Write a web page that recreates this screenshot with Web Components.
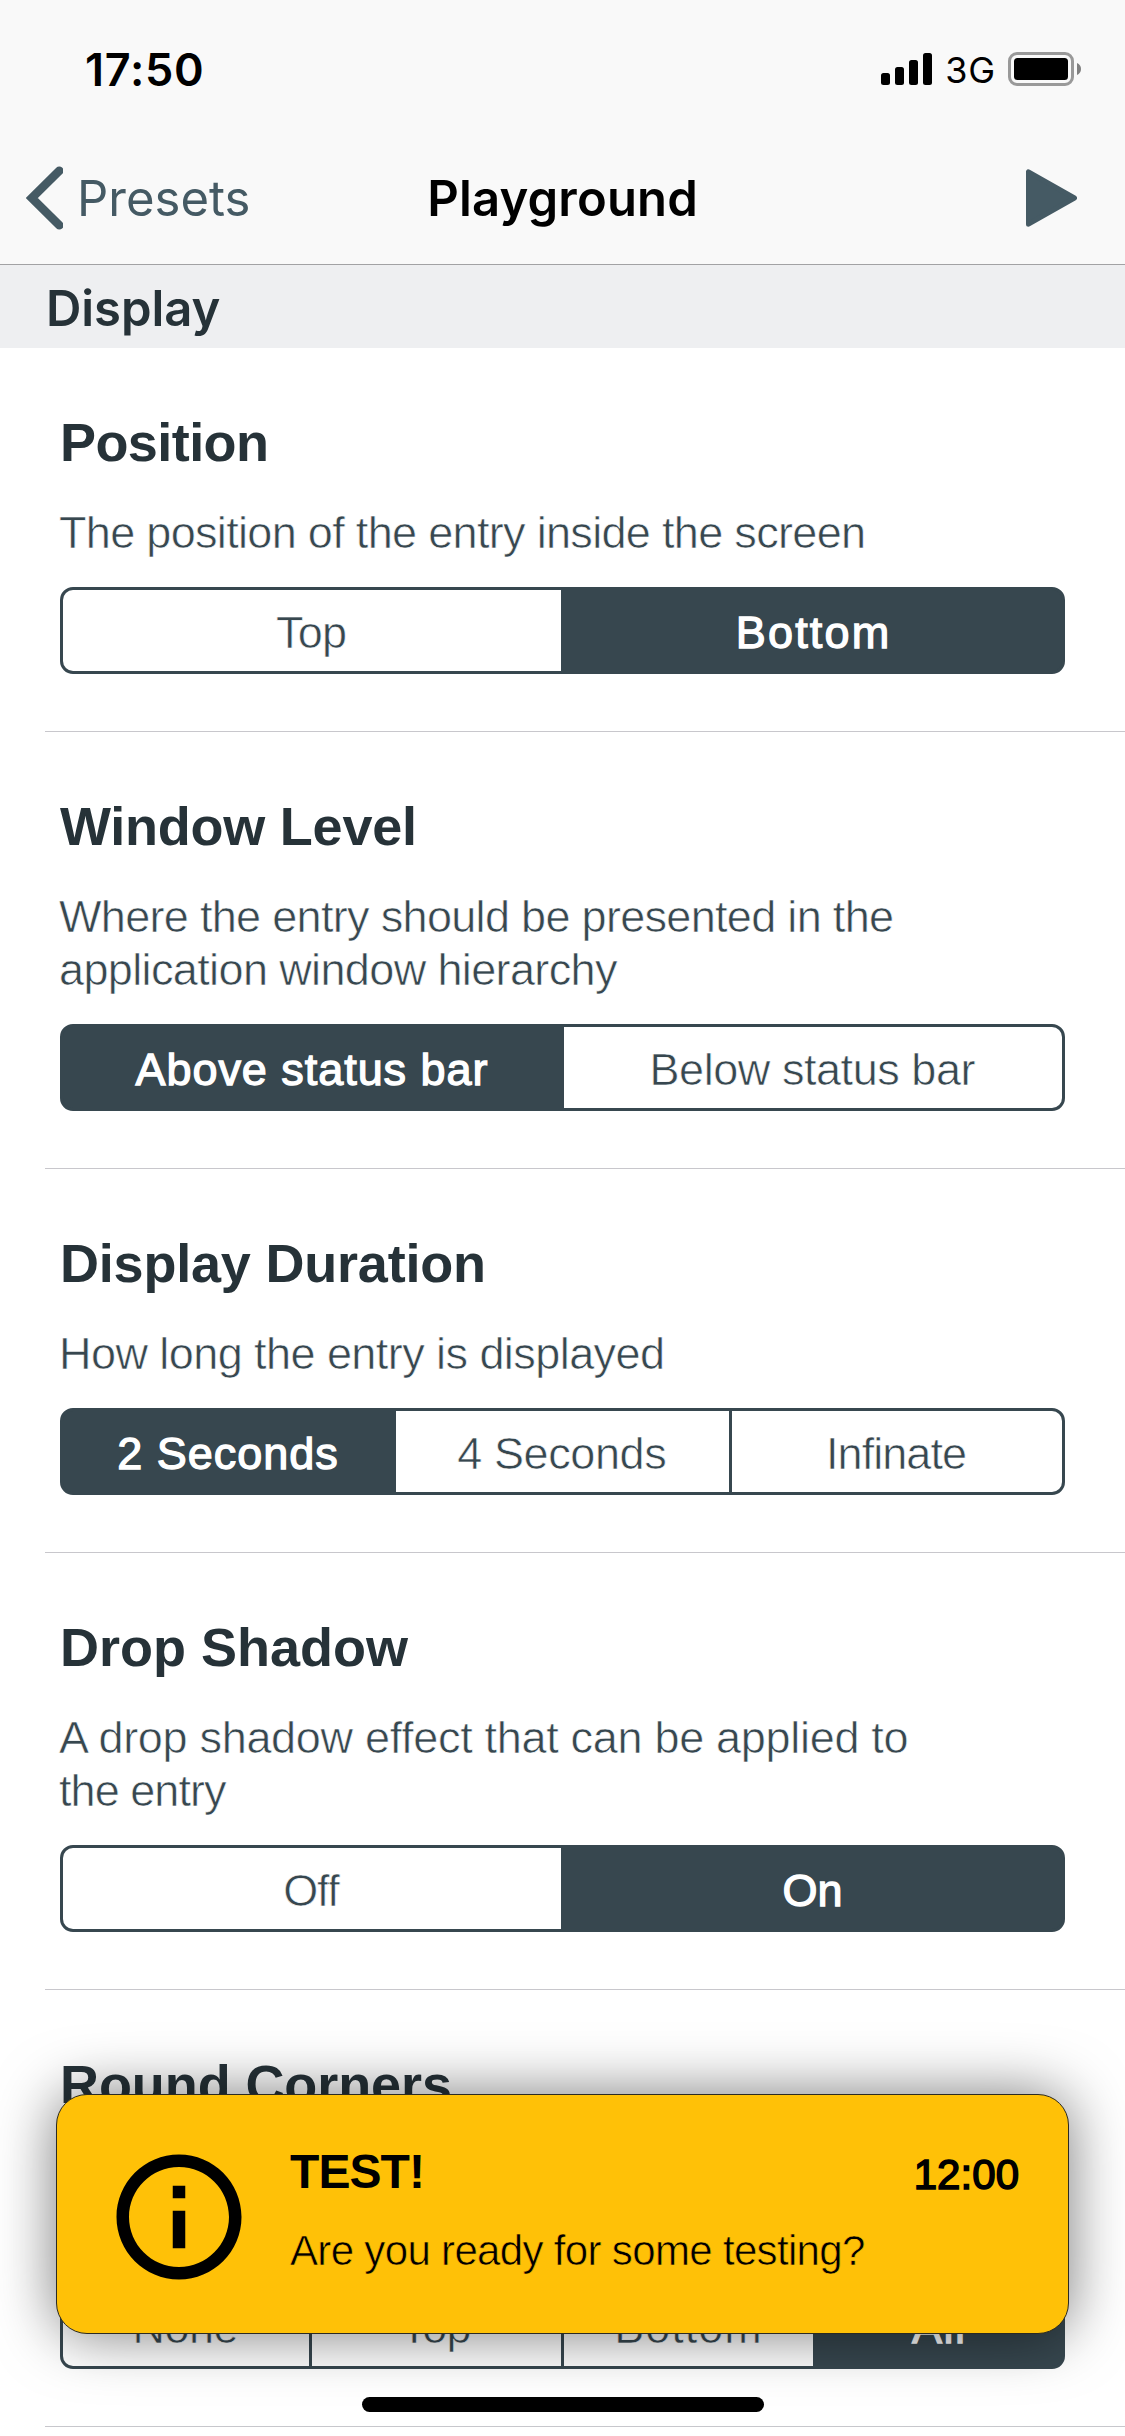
<!DOCTYPE html>
<html lang="en">
<head>
<meta charset="utf-8">
<title>Playground</title>
<style>
  html, body { margin: 0; padding: 0; background: #fff; }
  body { width: 1125px; height: 2436px; overflow: hidden; }
</style>
</head>
<body>
<app-screen></app-screen>
<script>
const HELV = '"Liberation Sans", Arial, sans-serif';
const SF = 'Inter, Roboto, sans-serif';
const measurer = document.createElement('canvas').getContext('2d');

class BaseElement extends HTMLElement {
  connectedCallback() {
    if (this.shadowRoot) return;
    this.attachShadow({ mode: 'open' }).innerHTML = this.render();
    this.ready && this.ready();
  }
}

/* One line of text, tracked so that its ink spans `ink` pixels. */
class TextLine extends BaseElement {
  render() {
    return `<style>
      :host { display: block; white-space: pre; width: max-content; }
      :host([face="title"]) { font: 700 54px/66px ${HELV}; color: #263238; }
      :host([face="light"]) { font: 400 45px/53px ${HELV}; color: #37474f; -webkit-text-stroke: .6px var(--paper, #fff); }
      :host([face="medium"]) { font: 400 45px/53px ${HELV}; color: #fff; -webkit-text-stroke: 1.3px #fff; }
      :host([face="toast-title"]) { font: 700 48px/58px ${HELV}; color: #000; }
      :host([face="toast-text"]) { font: 400 42px/50px ${HELV}; color: #000; -webkit-text-stroke: .6px var(--paper, #fff); }
      :host([face="toast-time"]) { font: 400 42px/58px ${HELV}; color: #000; -webkit-text-stroke: 1.6px #000; }
      :host([face="clock"]) { font: 600 45px/60px ${SF}; color: #000; }
      :host([face="carrier"]) { font: 400 36px/60px ${SF}; color: #000; }
      :host([face="nav"]) { font: 400 49px/132px ${SF}; color: #455a64; }
      :host([face="nav-title"]) { font: 600 49px/132px ${SF}; color: #000; }
      :host([face="section"]) { font: 600 49px/83px ${SF}; color: #263238; }
    </style><slot></slot>`;
  }
  ready() {
    const ink = parseFloat(this.getAttribute('ink'));
    if (!ink) return;
    const text = this.textContent, cs = getComputedStyle(this);
    measurer.font = `${cs.fontWeight} ${cs.fontSize} ${cs.fontFamily}`;
    const m = measurer.measureText(text);
    const natural = m.actualBoundingBoxRight + m.actualBoundingBoxLeft;
    const track = (ink - natural) / (text.length - 1);
    this.style.letterSpacing = track.toFixed(3) + 'px';
    this.style.marginRight = (-track).toFixed(3) + 'px';
  }
}

class StatusBar extends BaseElement {
  render() {
    return `<style>
      :host { display: flex; justify-content: space-between; align-items: flex-start; height: 132px; box-sizing: border-box; padding: 39px 44px 0 85px; }
      .right { display: flex; align-items: flex-start; }
      .bars { margin: 14px 13px 0 0; } .cell { margin: 13px 0 0 13px; }
      text-line { margin-top: 1px; }
      svg { display: block; }
    </style>
    <text-line face="clock" ink="115">17:50</text-line>
    <div class="right">
      <svg class="bars" width="51" height="32" viewBox="0 0 51 32">
        <rect x="0" y="20" width="9" height="12" rx="2.5"/><rect x="14" y="14" width="9" height="18" rx="2.5"/>
        <rect x="28" y="7" width="9" height="25" rx="2.5"/><rect x="42" y="0" width="9" height="32" rx="2.5"/>
      </svg>
      <text-line face="carrier" ink="46">3G</text-line>
      <svg class="cell" width="73" height="34" viewBox="0 0 73 34">
        <rect x="1.5" y="1.5" width="63" height="31" rx="7.5" fill="none" stroke="#999" stroke-width="3"/>
        <rect x="6" y="6" width="54" height="22" rx="3.5"/>
        <path d="M69 11c2.600 1 4 3.400 4 6s-1.400 5-4 6z" fill="#808080"/>
      </svg>
    </div>`;
  }
}

class NavBar extends BaseElement {
  render() {
    return `<style>
      :host { display: grid; grid-template-columns: 1fr auto 1fr; align-items: center; height: 132px; border-bottom: 1px solid #a2a2a4; }
      .back { display: flex; align-items: center; padding-left: 26px; gap: 14px; }
      .play { justify-self: end; margin-right: 48px; }
      svg { display: block; }
      text-line { padding-top: 1px; margin-bottom: -1px; }
    </style>
    <div class="back">
      <svg width="37" height="64" viewBox="0 0 37 64"><path d="M32.500 4.700L5 32l27.500 27.300" transform="translate(.8 0)" fill="none" stroke="#455a64" stroke-width="8.600" stroke-linecap="round" stroke-linejoin="miter"/></svg>
      <text-line face="nav" ink="167.500">Presets</text-line>
    </div>
    <text-line face="nav-title" ink="265">Playground</text-line>
    <svg class="play" width="51" height="58" viewBox="0 0 51 58"><path d="M2.500 2.800V55.200L48.500 29z" fill="#455a64" stroke="#455a64" stroke-width="5" stroke-linejoin="round"/></svg>`;
  }
}

class SectionHeader extends BaseElement {
  render() {
    return `<style>
      :host { display: block; height: 83px; box-sizing: border-box; padding: 2px 0 0 46px; background: #eeeff1; overflow: hidden; }
    </style><text-line face="section" ink="170.500">${this.getAttribute('label')}</text-line>`;
  }
}

/* labels: "Name:inkWidth|Name:inkWidth"; selected: index of the filled segment */
class SegmentedControl extends BaseElement {
  render() {
    const items = this.getAttribute('labels').split('|').map(s => s.split(':'));
    const sel = +this.getAttribute('selected');
    const cols = { 2: '498px 498px', 3: '330px 333px 330px', 4: '246px 249px 249px 246px' }[items.length];
    return `<style>
      :host { display: grid; grid-template-columns: ${cols}; gap: 3px; height: 87px; width: 1005px; box-sizing: border-box; border: 3px solid #37474f; border-radius: 13px; background: #37474f; }
      .seg { display: flex; align-items: center; justify-content: center; padding: 4px 1px 0 0; background: #fff; }
      .seg.on { background: #37474f; }
      style + .seg { border-radius: 10px 0 0 10px; }
      .seg:last-child { border-radius: 0 10px 10px 0; }
    </style>` + items.map(([t, w], i) =>
      `<div class="seg ${i === sel ? 'on' : ''}"><text-line face="${i === sel ? 'medium' : 'light'}" ink="${w}">${t}</text-line></div>`).join('');
  }
}

class SettingCell extends BaseElement {
  render() {
    return `<style>
      :host { display: flex; flex-direction: column; padding: 61px 60px 58px; background:
        linear-gradient(#c8c7cc, #c8c7cc) right bottom / 1080px 1px no-repeat #fff; }
      .desc { margin: 31px 0 28px -1px; min-height: var(--desc-height, 53px); }
    </style>
    <text-line face="title" ink="${this.getAttribute('ink')}">${this.getAttribute('heading')}</text-line>
    <div class="desc"><slot></slot></div>
    <segmented-control labels="${this.getAttribute('labels')}" selected="${this.getAttribute('selected')}"></segmented-control>`;
  }
}

class ToastNote extends BaseElement {
  render() {
    return `<style>
      :host { --paper: #ffc107; position: absolute; left: 56px; top: 2094px; width: 1013px; height: 240px; box-sizing: border-box;
        display: flex; padding: 0 49px 0 47px; background: #ffc107; border: 1px solid #2b2a22; border-radius: 31px; box-shadow: 0 0 60px rgba(0,0,0,.53); }
      svg { display: block; margin-top: 47px; flex: none; }
      .body { flex: 1; margin-left: 36px; padding-top: 48px; }
      .head { display: flex; justify-content: space-between; margin-bottom: 25px; }
      text-line[face="toast-time"] { padding-top: 3px; margin-bottom: -3px; }
    </style>
    <svg width="150" height="150" viewBox="0 0 24 24"><path d="M11 17h2v-6h-2v6zm1-15C6.480 2 2 6.480 2 12s4.480 10 10 10 10-4.480 10-10S17.520 2 12 2zm0 18c-4.410 0-8-3.590-8-8s3.590-8 8-8 8 3.590 8 8-3.590 8-8 8zM11 9h2V7h-2v2z"/></svg>
    <div class="body">
      <div class="head"><text-line face="toast-title" ink="131">TEST!</text-line><text-line face="toast-time" ink="101">12:00</text-line></div>
      <text-line face="toast-text" ink="574">Are you ready for some testing?</text-line>
    </div>`;
  }
}

class HomeIndicator extends BaseElement {
  render() {
    return `<style>:host { position: absolute; left: 362px; top: 2397px; width: 402px; height: 15px; border-radius: 8px; background: #000; }</style>`;
  }
}

class AppScreen extends BaseElement {
  render() {
    return `<style>
      :host { display: block; position: relative; width: 1125px; height: 2436px; overflow: hidden; background: #fff; }
      header { background: #f9f9f9; }
    </style>
    <header><status-bar></status-bar><nav-bar></nav-bar></header>
    <section-header label="Display"></section-header>
    <setting-cell heading="Position" ink="203" labels="Top:69|Bottom:148" selected="1">
      <text-line face="light" ink="804">The position of the entry inside the screen</text-line>
    </setting-cell>
    <setting-cell heading="Window Level" ink="354" labels="Above status bar:352|Below status bar:323" selected="0">
      <text-line face="light" ink="834">Where the entry should be presented in the</text-line>
      <text-line face="light" ink="558">application window hierarchy</text-line>
    </setting-cell>
    <setting-cell heading="Display Duration" ink="420" labels="2 Seconds:217|4 Seconds:207|Infinate:136" selected="0">
      <text-line face="light" ink="601">How long the entry is displayed</text-line>
    </setting-cell>
    <setting-cell heading="Drop Shadow" ink="346" labels="Off:55|On:56" selected="1">
      <text-line face="light" ink="851">A drop shadow effect that can be applied to</text-line>
      <text-line face="light" ink="168">the entry</text-line>
    </setting-cell>
    <setting-cell heading="Round Corners" ink="387" labels="None:102|Top:69|Bottom:142|All:50" selected="3" style="--desc-height:106px"></setting-cell>
    <toast-note></toast-note>
    <home-indicator></home-indicator>`;
  }
}

customElements.define('text-line', TextLine);
customElements.define('status-bar', StatusBar);
customElements.define('nav-bar', NavBar);
customElements.define('section-header', SectionHeader);
customElements.define('segmented-control', SegmentedControl);
customElements.define('setting-cell', SettingCell);
customElements.define('toast-note', ToastNote);
customElements.define('home-indicator', HomeIndicator);
customElements.define('app-screen', AppScreen);
</script>
</body>
</html>
